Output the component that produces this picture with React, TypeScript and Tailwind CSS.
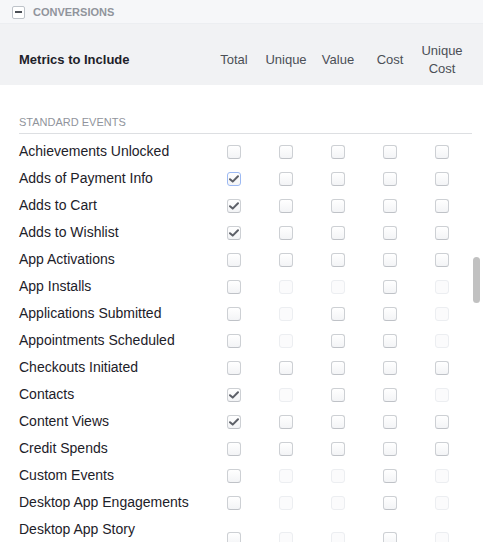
import React from "react";

type State = "on" | "off" | "dis" | "focus";

const columns = ["Total", "Unique", "Value", "Cost", "Unique Cost"];

const rows: { label: string; cells: State[] }[] = [
  { label: "Achievements Unlocked", cells: ["off", "off", "off", "off", "off"] },
  { label: "Adds of Payment Info", cells: ["focus", "off", "off", "off", "off"] },
  { label: "Adds to Cart", cells: ["on", "off", "off", "off", "off"] },
  { label: "Adds to Wishlist", cells: ["on", "off", "off", "off", "off"] },
  { label: "App Activations", cells: ["off", "off", "off", "off", "off"] },
  { label: "App Installs", cells: ["off", "dis", "dis", "off", "dis"] },
  { label: "Applications Submitted", cells: ["off", "dis", "off", "off", "dis"] },
  { label: "Appointments Scheduled", cells: ["off", "dis", "off", "off", "dis"] },
  { label: "Checkouts Initiated", cells: ["off", "off", "off", "off", "off"] },
  { label: "Contacts", cells: ["on", "dis", "off", "off", "dis"] },
  { label: "Content Views", cells: ["on", "off", "off", "off", "off"] },
  { label: "Credit Spends", cells: ["off", "off", "off", "off", "off"] },
  { label: "Custom Events", cells: ["off", "dis", "dis", "off", "dis"] },
  { label: "Desktop App Engagements", cells: ["off", "dis", "dis", "off", "dis"] },
  { label: "Desktop App Story Engagements", cells: ["off", "dis", "dis", "off", "dis"] },
  { label: "Desktop App Uses", cells: ["off", "dis", "dis", "off", "dis"] },
];

const Check = ({ state }: { state: State }) => {
  if (state === "dis") {
    return <span className="block w-[14px] h-[14px] rounded-[3px] border border-[#eceef1] bg-[#fbfbfc]" />;
  }
  const checked = state === "on" || state === "focus";
  return (
    <span
      className={
        state === "focus"
          ? "flex items-center justify-center w-[14px] h-[14px] rounded-[3px] border border-[#9cb9f3] bg-gradient-to-b from-white to-[#f3f4f6]"
          : "flex items-center justify-center w-[14px] h-[14px] rounded-[3px] border border-[#cdd0d4] border-b-[#bfc2c7] bg-gradient-to-b from-white to-[#f3f4f6]"
      }
    >
      {checked && (
        <svg width="10" height="8" viewBox="0 0 10 8">
          <path d="M1 4.2 L3.7 6.6 L9 1.2" fill="none" stroke="#5d6068" strokeWidth="2" strokeLinecap="round" strokeLinejoin="round" />
        </svg>
      )}
    </span>
  );
};

export default function App() {
  return (
    <div className="relative h-[542px] w-full overflow-hidden bg-white font-['Liberation_Sans',Arial,sans-serif]">
      {/* Section toggle */}
      <div className="h-[24px] pt-[1px] flex items-center pl-[12px] bg-[#f6f7f9] border-b border-[#eceef1]">
        <span className="flex items-center justify-center w-[13px] h-[13px] rounded-[2px] border border-[#bec3c9] bg-white">
          <span className="block w-[7px] h-[2px] bg-[#4b4f56]" />
        </span>
        <span className="ml-[8px] text-[11px] font-bold text-[#90949c] leading-[13px]">CONVERSIONS</span>
      </div>

      {/* Column header */}
      <div className="h-[61px] pt-[11px] flex items-center pl-[19px] pr-[15px] bg-[#f1f2f4]">
        <div className="flex-1 text-[13px] font-bold text-[#1d2129]">Metrics to Include</div>
        {columns.map((c) => (
          <div key={c} className="w-[52px] text-center text-[13px] leading-[18px] text-[#4b4f56]">
            {c === "Unique Cost" ? (
              <>
                Unique
                <br />
                Cost
              </>
            ) : (
              c
            )}
          </div>
        ))}
      </div>

      {/* Rows */}
      <div className="pl-[19px] pr-[11px] pt-[31px]">
        <div className="text-[11px] leading-[13px] text-[#90949c] pb-[4px] border-b border-[#dddfe2]">STANDARD EVENTS</div>
        <div className="mt-[4px]">
          {rows.map((r) => (
            <div key={r.label} className="flex items-center py-[4px] pr-[4px]">
              <div className="flex-1 text-[14px] leading-[19px] text-[#1d2129] pr-[10px]">{r.label}</div>
              {r.cells.map((s, i) => (
                <div key={i} className="w-[52px] flex justify-center">
                  <Check state={s} />
                </div>
              ))}
            </div>
          ))}
        </div>
      </div>

      {/* Scrollbar thumb */}
      <div className="absolute left-[473px] top-[257px] w-[7px] h-[46px] rounded-full bg-[#c1c1c1]" />
    </div>
  );
}
